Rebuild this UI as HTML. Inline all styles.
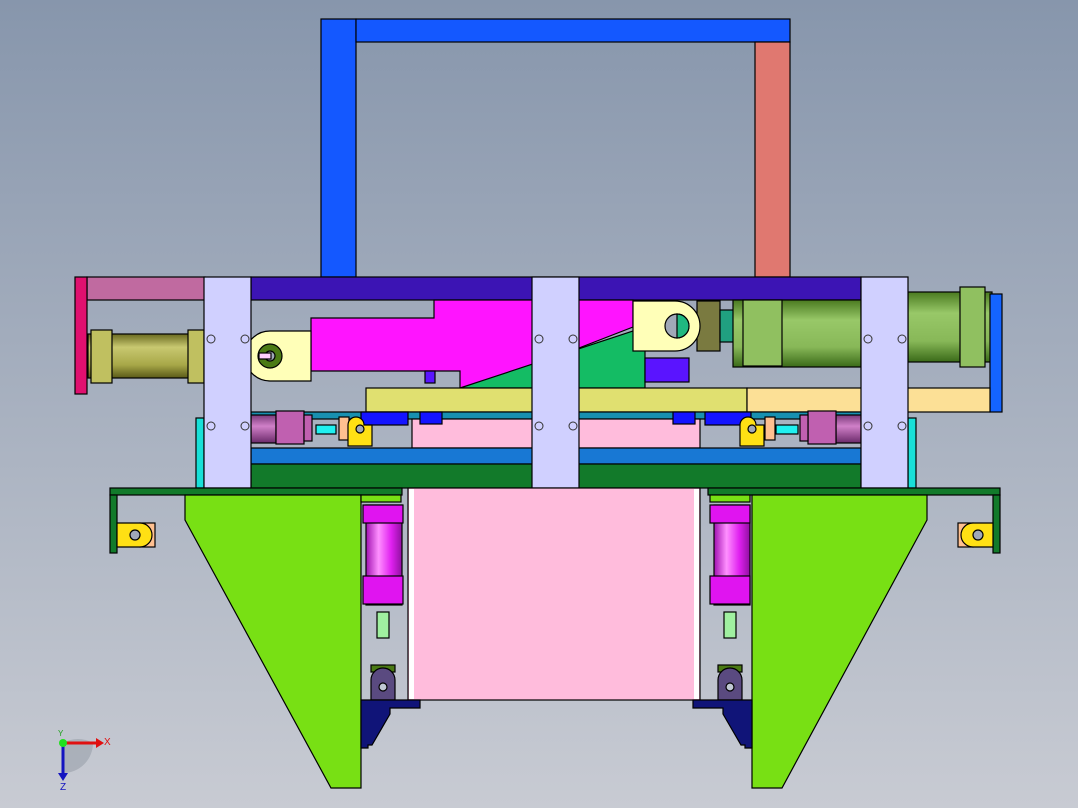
<!DOCTYPE html>
<html><head><meta charset="utf-8"><style>
html,body{margin:0;padding:0;width:1078px;height:808px;overflow:hidden}
svg{display:block}
</style></head><body>
<svg width="1078" height="808" viewBox="0 0 1078 808" xmlns="http://www.w3.org/2000/svg" font-family="Liberation Sans, sans-serif">
<defs>
<linearGradient id="bg" x1="0" y1="0" x2="0" y2="1"><stop offset="0" stop-color="#8796ac"/><stop offset="1" stop-color="#c8cbd3"/></linearGradient>
<linearGradient id="cylO" x1="0" y1="0" x2="0" y2="1"><stop offset="0" stop-color="#6a6a20"/><stop offset=".3" stop-color="#c8c870"/><stop offset=".7" stop-color="#a8a848"/><stop offset="1" stop-color="#5a5a18"/></linearGradient>
<linearGradient id="cylG" x1="0" y1="0" x2="0" y2="1"><stop offset="0" stop-color="#4a7a20"/><stop offset=".3" stop-color="#98c868"/><stop offset=".7" stop-color="#88b858"/><stop offset="1" stop-color="#3a6a18"/></linearGradient>
<linearGradient id="cylP" x1="0" y1="0" x2="0" y2="1"><stop offset="0" stop-color="#7a3a7a"/><stop offset=".4" stop-color="#d080c8"/><stop offset="1" stop-color="#6a2a6a"/></linearGradient>
<linearGradient id="cylM" x1="0" y1="0" x2="1" y2="0"><stop offset="0" stop-color="#a010b0"/><stop offset=".35" stop-color="#ff90ff"/><stop offset=".7" stop-color="#e020f0"/><stop offset="1" stop-color="#9010a0"/></linearGradient>
</defs>
<rect width="1078" height="808" fill="url(#bg)"/>
<g stroke="#000" stroke-width="1.2">
<rect x="321" y="19" width="35" height="258" fill="#1458ff"/>
<rect x="356" y="19" width="434" height="23" fill="#1458ff"/>
<rect x="755" y="42" width="35" height="235" fill="#e07870"/>
<rect x="87" y="277" width="118" height="23" fill="#c06aa0"/>
<rect x="75" y="277" width="12" height="117" fill="#e0106f"/>
<rect x="88" y="334" width="116" height="44" fill="url(#cylO)"/>
<rect x="91" y="330" width="21" height="53" fill="#c0c060"/>
<rect x="188" y="330" width="16" height="53" fill="#c0c060"/>
<rect x="251" y="277" width="610" height="23" fill="#3c14b4"/>
<path d="M311 318H434V300H633V327L579 348V388H460V371H311Z" fill="#ff14ff"/>
<path d="M460 388L645 327V388Z" fill="#14bc64"/>
<rect x="645" y="358" width="44" height="24" fill="#5a14ff"/>
<rect x="425" y="371" width="10" height="12" fill="#5a14ff"/>
<path d="M311 331H270A25 25 0 0 0 270 381H311Z" fill="#ffffb8"/>
<circle cx="270" cy="356" r="12" fill="#4a7a14"/>
<circle cx="270" cy="356" r="5" fill="#a0a8b8"/>
<rect x="259" y="353" width="12" height="6" fill="#ffd0ff"/>
<rect x="697" y="301" width="23" height="50" fill="#7a7a40"/>
<path d="M633 301H675A25 25 0 0 1 675 351H633Z" fill="#ffffb8"/>
<circle cx="677" cy="326" r="12" fill="#a0a8b8"/>
<path d="M677 314A12 12 0 0 1 677 338Z" fill="#20b880"/>
<rect x="720" y="310" width="14" height="32" fill="#20a080"/>
<rect x="733" y="300" width="128" height="67" fill="url(#cylG)"/>
<rect x="743" y="300" width="39" height="66" fill="#90c060"/>
<rect x="908" y="292" width="84" height="70" fill="url(#cylG)"/>
<rect x="960" y="287" width="25" height="80" fill="#90c060"/>
<rect x="990" y="294" width="12" height="118" fill="#1464ff"/>
<rect x="366" y="388" width="381" height="24" fill="#e0e070"/>
<rect x="747" y="388" width="243" height="24" fill="#fce096"/>
<rect x="251" y="412" width="610" height="7" fill="#1890b0"/>
<rect x="412" y="419" width="288" height="29" fill="#ffbcdc"/>
<rect x="251" y="448" width="610" height="16" fill="#1878d4"/>
<rect x="251" y="464" width="610" height="24" fill="#127a2a"/>
<rect x="361" y="412" width="47" height="13" fill="#1414ff"/>
<rect x="705" y="412" width="46" height="13" fill="#1414ff"/>
<rect x="673" y="412" width="22" height="12" fill="#1414ff"/>
<rect x="420" y="412" width="22" height="12" fill="#1414ff"/>
<rect x="251" y="415" width="25" height="28" fill="url(#cylP)"/>
<rect x="276" y="411" width="28" height="33" fill="#c060b0"/>
<rect x="304" y="415" width="8" height="26" fill="#c060b0"/>
<rect x="316" y="425" width="20" height="9" fill="#20f0f0"/>
<rect x="339" y="417" width="10" height="23" fill="#ffc090"/>
<path d="M348 446V425A8 8 0 0 1 364 425H372V446Z" fill="#ffe014"/>
<circle cx="360" cy="429" r="4" fill="#a0a8b8"/>
<rect x="836" y="415" width="25" height="28" fill="url(#cylP)"/>
<rect x="808" y="411" width="28" height="33" fill="#c060b0"/>
<rect x="800" y="415" width="8" height="26" fill="#c060b0"/>
<rect x="776" y="425" width="22" height="9" fill="#20f0f0"/>
<rect x="765" y="417" width="10" height="23" fill="#ffc090"/>
<path d="M740 446V425A8 8 0 0 1 756 425H764V446Z" fill="#ffe014"/>
<circle cx="752" cy="429" r="4" fill="#a0a8b8"/>
<rect x="196" y="418" width="8" height="70" fill="#18e0d8"/>
<rect x="908" y="418" width="8" height="70" fill="#18e0d8"/>
<rect x="204" y="277" width="47" height="211" fill="#d0d0ff"/>
<rect x="532" y="277" width="47" height="211" fill="#d0d0ff"/>
<rect x="861" y="277" width="47" height="211" fill="#d0d0ff"/>
</g>
<g fill="none" stroke="#333" stroke-width="1">
<circle cx="211" cy="339" r="4"/><circle cx="245" cy="339" r="4"/><circle cx="211" cy="426" r="4"/><circle cx="245" cy="426" r="4"/>
<circle cx="539" cy="339" r="4"/><circle cx="573" cy="339" r="4"/><circle cx="539" cy="426" r="4"/><circle cx="573" cy="426" r="4"/>
<circle cx="868" cy="339" r="4"/><circle cx="902" cy="339" r="4"/><circle cx="868" cy="426" r="4"/><circle cx="902" cy="426" r="4"/>
</g>
<g stroke="#000" stroke-width="1.2">
<rect x="110" y="488" width="292" height="7" fill="#127a2a"/>
<rect x="110" y="495" width="7" height="58" fill="#127a2a"/>
<rect x="708" y="488" width="292" height="7" fill="#127a2a"/>
<rect x="993" y="495" width="7" height="58" fill="#127a2a"/>
<rect x="140" y="523" width="15" height="24" fill="#ffc090"/>
<path d="M117 523H140A12 12 0 0 1 140 547H117Z" fill="#ffe014"/>
<circle cx="135" cy="535" r="5" fill="#a0a8b8"/>
<rect x="958" y="523" width="15" height="24" fill="#ffc090"/>
<path d="M993 523H973A12 12 0 0 0 973 547H993Z" fill="#ffe014"/>
<circle cx="978" cy="535" r="5" fill="#a0a8b8"/>
<path d="M185 495H361V788H331L185 520Z" fill="#78e014"/>
<path d="M752 495H927V520L782 788H752Z" fill="#78e014"/>
<rect x="408" y="488" width="292" height="212" fill="#ffbcdc"/>
<rect x="409" y="489" width="5" height="210" fill="#fff" stroke="none"/>
<rect x="694" y="489" width="5" height="210" fill="#fff" stroke="none"/>
<rect x="361" y="495" width="40" height="7" fill="#78e014"/>
<rect x="366" y="505" width="36" height="100" fill="url(#cylM)"/>
<rect x="363" y="505" width="40" height="18" fill="#e014f0"/>
<rect x="363" y="576" width="40" height="28" fill="#e014f0"/>
<rect x="377" y="612" width="12" height="26" fill="#a0f0a0"/>
<rect x="710" y="495" width="40" height="7" fill="#78e014"/>
<rect x="714" y="505" width="36" height="100" fill="url(#cylM)"/>
<rect x="710" y="505" width="40" height="18" fill="#e014f0"/>
<rect x="710" y="576" width="40" height="28" fill="#e014f0"/>
<rect x="724" y="612" width="12" height="26" fill="#a0f0a0"/>
<rect x="371" y="665" width="24" height="7" fill="#4a7a14"/>
<path d="M371 700V680A12 12 0 0 1 395 680V700Z" fill="#5a4a80"/>
<circle cx="383" cy="687" r="4" fill="#c0c8d4"/>
<path d="M361 700H420V708H390V714L372 745H368V748H361Z" fill="#101478"/>
<rect x="718" y="665" width="24" height="7" fill="#4a7a14"/>
<path d="M718 700V680A12 12 0 0 1 742 680V700Z" fill="#5a4a80"/>
<circle cx="730" cy="687" r="4" fill="#c0c8d4"/>
<path d="M752 700H693V708H723V714L741 745H745V748H752Z" fill="#101478"/>
</g>
<path d="M63 743A30 30 0 0 1 93 743A30 30 0 0 1 63 773Z" fill="#9aa0aa" opacity=".6"/>
<line x1="63" y1="743" x2="96" y2="743" stroke="#e01010" stroke-width="3"/>
<path d="M96 738L104 743L96 748Z" fill="#e01010"/>
<line x1="63" y1="743" x2="63" y2="775" stroke="#1414c0" stroke-width="3"/>
<path d="M58 773L63 781L68 773Z" fill="#1414c0"/>
<circle cx="63" cy="743" r="4" fill="#20e020"/>
<text x="104" y="745" font-size="10" fill="#e01010">X</text>
<text x="60" y="790" font-size="10" fill="#1414c0">Z</text>
<text x="58" y="736" font-size="8" fill="#20a020">Y</text>
</svg>
</body></html>
